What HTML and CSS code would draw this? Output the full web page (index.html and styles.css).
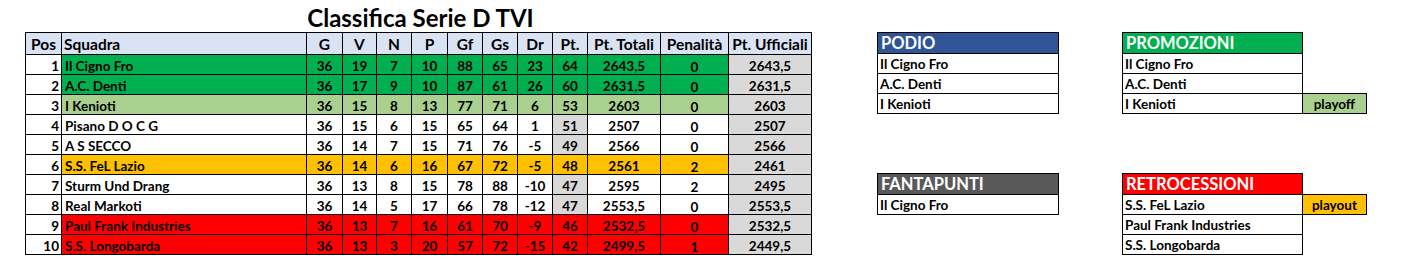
FILE: index.html
```html
<!DOCTYPE html>
<html lang="it">
<head>
<meta charset="utf-8">
<title>Classifica Serie D TVI</title>
<link rel="stylesheet" href="styles.css">
</head>
<body>
<div class="page">
  <section class="league">
    <h1 class="title">Classifica Serie D TVI</h1>
    <table class="standings">
      <colgroup>
        <col class="c-pos"><col class="c-team"><col class="c-n36"><col class="c-n34"><col class="c-n35"><col class="c-n36"><col class="c-n35"><col class="c-n35"><col class="c-n35"><col class="c-n35"><col class="c-tot"><col class="c-pen"><col class="c-uff">
      </colgroup>
      <thead>
        <tr><th class="pos">Pos</th><th class="team">Squadra</th><th>G</th><th>V</th><th>N</th><th>P</th><th>Gf</th><th>Gs</th><th>Dr</th><th>Pt.</th><th>Pt. Totali</th><th>Penalità</th><th>Pt. Ufficiali</th></tr>
      </thead>
      <tbody>
        <tr class="green"><td class="pos">1</td><td class="team">Il Cigno Fro</td><td>36</td><td>19</td><td>7</td><td>10</td><td>88</td><td>65</td><td>23</td><td class="pt">64</td><td>2643,5</td><td class="pen">0</td><td class="uff">2643,5</td></tr>
        <tr class="green"><td class="pos">2</td><td class="team">A.C. Denti</td><td>36</td><td>17</td><td>9</td><td>10</td><td>87</td><td>61</td><td>26</td><td class="pt">60</td><td>2631,5</td><td class="pen">0</td><td class="uff">2631,5</td></tr>
        <tr class="lgreen"><td class="pos">3</td><td class="team">I Kenioti</td><td>36</td><td>15</td><td>8</td><td>13</td><td>77</td><td>71</td><td>6</td><td class="pt">53</td><td>2603</td><td class="pen">0</td><td class="uff">2603</td></tr>
        <tr class="plain"><td class="pos">4</td><td class="team">Pisano D O C G</td><td>36</td><td>15</td><td>6</td><td>15</td><td>65</td><td>64</td><td>1</td><td class="pt">51</td><td>2507</td><td class="pen">0</td><td class="uff">2507</td></tr>
        <tr class="plain"><td class="pos">5</td><td class="team">A S SECCO</td><td>36</td><td>14</td><td>7</td><td>15</td><td>71</td><td>76</td><td>-5</td><td class="pt">49</td><td>2566</td><td class="pen">0</td><td class="uff">2566</td></tr>
        <tr class="orange"><td class="pos">6</td><td class="team">S.S. FeL Lazio</td><td>36</td><td>14</td><td>6</td><td>16</td><td>67</td><td>72</td><td>-5</td><td class="pt">48</td><td>2561</td><td class="pen">2</td><td class="uff">2461</td></tr>
        <tr class="plain"><td class="pos">7</td><td class="team">Sturm Und Drang</td><td>36</td><td>13</td><td>8</td><td>15</td><td>78</td><td>88</td><td>-10</td><td class="pt">47</td><td>2595</td><td class="pen">2</td><td class="uff">2495</td></tr>
        <tr class="plain"><td class="pos">8</td><td class="team">Real Markoti</td><td>36</td><td>14</td><td>5</td><td>17</td><td>66</td><td>78</td><td>-12</td><td class="pt">47</td><td>2553,5</td><td class="pen">0</td><td class="uff">2553,5</td></tr>
        <tr class="red"><td class="pos">9</td><td class="team">Paul Frank Industries</td><td>36</td><td>13</td><td>7</td><td>16</td><td>61</td><td>70</td><td>-9</td><td class="pt">46</td><td>2532,5</td><td class="pen">0</td><td class="uff">2532,5</td></tr>
        <tr class="red"><td class="pos">10</td><td class="team">S.S. Longobarda</td><td>36</td><td>13</td><td>3</td><td>20</td><td>57</td><td>72</td><td>-15</td><td class="pt">42</td><td>2499,5</td><td class="pen">1</td><td class="uff">2449,5</td></tr>
      </tbody>
    </table>
  </section>

  <section class="boxes">
    <table class="box">
      <tr><th class="head blue">PODIO</th></tr>
      <tr><td class="name">Il Cigno Fro</td></tr>
      <tr><td class="name">A.C. Denti</td></tr>
      <tr><td class="name">I Kenioti</td></tr>
    </table>
    <table class="box">
      <tr><th class="head green-h">PROMOZIONI</th><td class="empty"></td></tr>
      <tr><td class="name">Il Cigno Fro</td><td class="empty"></td></tr>
      <tr><td class="name">A.C. Denti</td><td class="empty"></td></tr>
      <tr><td class="name">I Kenioti</td><td class="tag tag-green">playoff</td></tr>
    </table>
    <table class="box">
      <tr><th class="head grey">FANTAPUNTI</th></tr>
      <tr><td class="name">Il Cigno Fro</td></tr>
    </table>
    <table class="box">
      <tr><th class="head red-h">RETROCESSIONI</th><td class="empty"></td></tr>
      <tr><td class="name">S.S. FeL Lazio</td><td class="tag tag-orange">playout</td></tr>
      <tr><td class="name">Paul Frank Industries</td><td class="empty"></td></tr>
      <tr><td class="name">S.S. Longobarda</td><td class="empty"></td></tr>
    </table>
  </section>
</div>
</body>
</html>
```

FILE: styles.css
```css
html, body {
  margin: 0;
  padding: 0;
  background: #ffffff;
}

body {
  font-family: "Lato", "Open Sans", sans-serif;
  font-weight: 700;
  color: #000;
}

.page {
  display: flex;
  align-items: flex-start;
  padding-left: 25px;
}

.league {
  width: 787px;
  display: flex;
  flex-direction: column;
}

.title {
  margin: 0;
  height: 32px;
  font-size: 24px;
  line-height: 36px;
  font-weight: 700;
  text-align: center;
  padding-left: 4px;
  box-sizing: border-box;
}

.standings {
  border-collapse: collapse;
  table-layout: fixed;
  width: 787px;
  font-size: 13.5px;
}

.c-pos { width: 36px; }
.c-team { width: 245px; }
.c-n36 { width: 36px; }
.c-n34 { width: 34px; }
.c-n35 { width: 35px; }
.c-tot { width: 73px; }
.c-pen { width: 68px; }
.c-uff { width: 83px; }

.standings th,
.standings td {
  border: 1px solid #000;
  padding: 0 2px;
  white-space: nowrap;
  overflow: hidden;
  text-align: center;
}

.standings th {
  height: 20px;
  background: #dae3f3;
  font-size: 15.5px;
  font-weight: 700;
  line-height: 20px;
  padding-top: 1px;
  vertical-align: bottom;
}

.standings td {
  height: 19px;
  line-height: 16px;
  padding-top: 3px;
  padding-bottom: 0;
  vertical-align: bottom;
  box-sizing: border-box;
}

.standings th.pos { text-align: center; }
.standings th.team { text-align: left; }
.standings td.pos { text-align: right; background: #fff; padding-right: 2px; }
.standings td.team { text-align: left; padding-left: 3px; }

.green td { background: #00b050; }
.lgreen td { background: #a9d08e; }
.orange td { background: #ffc000; }
.red td { background: #ff0000; }
.plain td { background: #fff; }
.plain td.pt { background: #d9d9d9; }
.standings td.uff { background: #d9d9d9; }
.standings td.pos { background: #fff; }
.standings td.pen { padding-top: 5px; line-height: 14px; }

.boxes {
  display: grid;
  grid-template-columns: 245px 245px;
  grid-template-rows: 141px 90px;
  margin-left: 65px;
  margin-top: 32px;
}

.box {
  border-collapse: collapse;
  table-layout: fixed;
  font-size: 13.5px;
  align-self: start;
  justify-self: start;
}

.box .head {
  width: 181px;
  height: 21px;
  border: 1px solid #000;
  color: #fff;
  text-align: left;
  font-size: 16.5px;
  line-height: 20px;
  padding: 0 3px;
  box-sizing: border-box;
  vertical-align: bottom;
}

.box .name {
  width: 181px;
  height: 20px;
  border: 1px solid #000;
  padding: 2px 2px 0;
  line-height: 17px;
  text-align: left;
  vertical-align: bottom;
  box-sizing: border-box;
  white-space: nowrap;
}

.box .empty {
  width: 64px;
  border: none;
  padding: 0;
}

.box .tag {
  width: 64px;
  border: 1px solid #000;
  text-align: center;
  padding: 2px 2px 0;
  line-height: 17px;
  vertical-align: bottom;
  box-sizing: border-box;
}

.blue { background: #2f5597; }
.green-h { background: #00b050; }
.grey { background: #595959; }
.red-h { background: #ff0000; }
.tag-green { background: #a9d08e; }
.tag-orange { background: #ffc000; }
```
